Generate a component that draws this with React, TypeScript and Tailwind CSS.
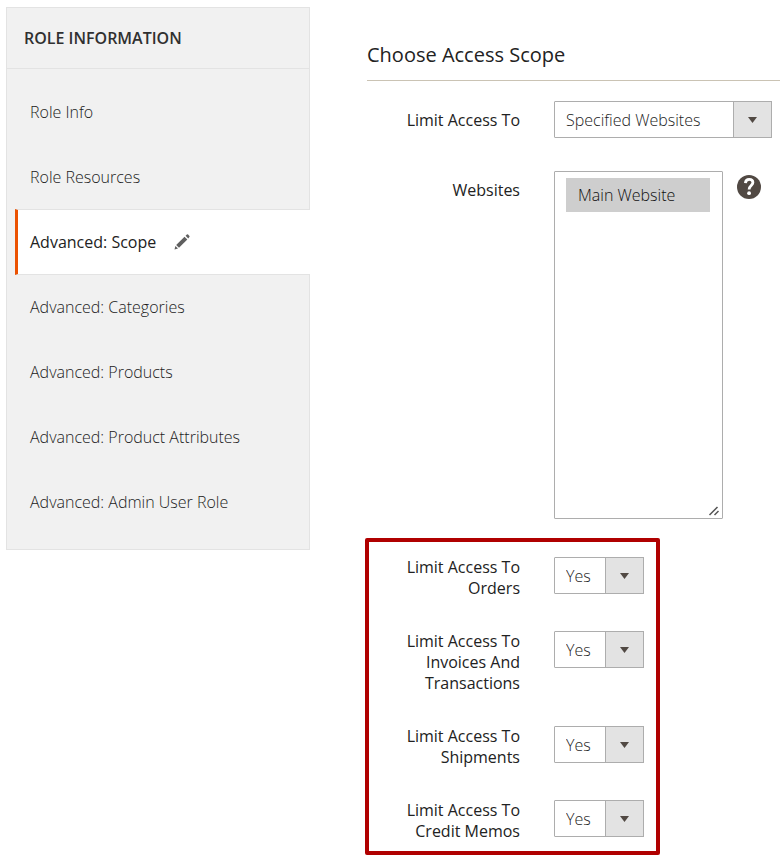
import { useState } from "react";
import type { ReactNode } from "react";
import clsx from "clsx";

const tabs = [
  "Role Info",
  "Role Resources",
  "Advanced: Scope",
  "Advanced: Categories",
  "Advanced: Products",
  "Advanced: Product Attributes",
  "Advanced: Admin User Role",
];

const limits = [
  { id: "limit-orders", label: "Limit Access To Orders" },
  { id: "limit-invoices", label: "Limit Access To Invoices And Transactions" },
  { id: "limit-shipments", label: "Limit Access To Shipments" },
  { id: "limit-creditmemos", label: "Limit Access To Credit Memos" },
];

function PencilIcon() {
  return (
    <svg viewBox="0 0 16 16" className="h-4 w-4 fill-[#5f5f5f]" aria-hidden="true">
      <path d="M11.6 1.8 12.9.6q.6-.5 1.2 0l1.3 1.3q.5.6 0 1.2L14.2 4.4z" />
      <path d="M10.5 2.7 13.3 5.5 5 13.7 2.2 10.9z" />
      <path d="M1.4 11.9 4 14.5.5 15.5z" />
    </svg>
  );
}

function HelpIcon() {
  return (
    <svg viewBox="0 0 24 24" className="h-6 w-6" aria-hidden="true">
      <circle cx="12" cy="12" r="12" className="fill-[#514943]" />
      <path
        d="M8.4 8.2C8.6 5.6 10 4.4 12.2 4.4c2.2 0 3.7 1.3 3.7 3.2 0 2.8-3.8 3.1-3.8 6.8"
        className="fill-none stroke-white stroke-[2.8px]"
      />
      <circle cx="12.1" cy="18.2" r="1.9" className="fill-white" />
    </svg>
  );
}

function ResizeGrip() {
  return (
    <svg
      viewBox="0 0 14 14"
      className="pointer-events-none absolute right-px bottom-px h-3.5 w-3.5 bg-white"
      aria-hidden="true"
    >
      <path d="M1.5 11 9.5 3M6.5 11 10.5 7" className="fill-none stroke-[#555555] stroke-[1.5px]" />
    </svg>
  );
}

type SelectProps = {
  id: string;
  options: string[];
  initial: string;
};

function Select({ id, options, initial }: SelectProps) {
  const [value, setValue] = useState(initial);

  return (
    <div className="relative">
      <select
        id={id}
        value={value}
        onChange={(e) => setValue(e.target.value)}
        className="h-[37px] appearance-none rounded-[1px] border border-[#adadad] bg-white pr-[52px] pl-[11px] text-base font-light text-[#1c1c1c]"
      >
        {options.map((option) => (
          <option key={option}>{option}</option>
        ))}
      </select>
      <span className="pointer-events-none absolute inset-y-0 right-0 flex w-[39px] items-center justify-center border border-[#adadad] bg-[#e3e3e3]">
        <svg viewBox="0 0 9 6" className="h-1.5 w-[9px] fill-[#514943]" aria-hidden="true">
          <path d="M0 0h9L4.5 6z" />
        </svg>
      </span>
    </div>
  );
}

type FieldProps = {
  id: string;
  label: string;
  labelClassName?: string;
  children: ReactNode;
};

function Field({ id, label, labelClassName, children }: FieldProps) {
  return (
    <div className="flex items-start gap-[34px]">
      <label
        htmlFor={id}
        className={clsx("w-[151px] shrink-0 text-right leading-[21px] font-medium", labelClassName)}
      >
        {label}
      </label>
      {children}
    </div>
  );
}

function Sidebar() {
  const [active, setActive] = useState("Advanced: Scope");

  return (
    <nav className="w-[304px] shrink-0 self-start border-y border-l border-[#e3e3e3] bg-[#f1f1f1]">
      <h2 className="border-r border-b border-[#e3e3e3] px-[17px] py-[18px] font-semibold text-[#303030] uppercase">
        Role Information
      </h2>
      <ul className="border-[#e3e3e3]">
        <li className="h-2.5 border-r border-[#e3e3e3]" />
        {tabs.map((tab) => (
          <li
            key={tab}
            className={clsx(
              "h-[65px]",
              tab === active ? "pl-2" : "border-r border-[#e3e3e3] pl-[11px]"
            )}
          >
            <a
              href="#"
              onClick={() => setActive(tab)}
              className={clsx(
                "flex items-center gap-[18px] pl-3",
                tab === active
                  ? "h-[66px] border-y border-l-3 border-y-[#e3e3e3] border-l-[#eb5202] bg-white font-medium text-[#222222]"
                  : "h-full font-light text-[#1c1c1c]"
              )}
            >
              {tab}
              {tab === active && <PencilIcon />}
            </a>
          </li>
        ))}
        <li className="h-[15px] border-r border-[#e3e3e3]" />
      </ul>
    </nav>
  );
}

export default function App() {
  return (
    <div className="flex bg-white pt-[7px] pl-1.5 font-['Open_Sans',sans-serif] text-base text-[#222222]">
      <Sidebar />

      <main className="min-w-0 flex-1 pt-8 pb-[9px] pl-[55px]">
        <h1 className="ml-0.5 border-b border-[#cac3b4] pb-[9px] text-xl leading-8 font-medium">
          Choose Access Scope
        </h1>

        <div className="flex flex-col gap-[33px] px-1 pt-5">
          <Field id="limit-access" label="Limit Access To" labelClassName="pt-[9px]">
            <Select
              id="limit-access"
              options={["All", "Specified Websites", "Specified Store Views"]}
              initial="Specified Websites"
            />
          </Field>
          <Field id="websites" label="Websites" labelClassName="pt-[9px]">
            <div className="flex items-start gap-3.5">
              <div className="relative flex">
                <select
                  id="websites"
                  multiple
                  defaultValue={["Main Website"]}
                  className="h-[348px] w-[169px] resize-y overflow-auto rounded-[1px] border border-[#adadad] bg-white py-1.5 pr-3 pl-[11px]"
                >
                  <option className="h-[34px] px-3 py-1.5 font-light">Main Website</option>
                </select>
                <ResizeGrip />
              </div>
              <button type="button" aria-label="Help" className="mt-1">
                <HelpIcon />
              </button>
            </div>
          </Field>
        </div>

        <div className="mt-[19px] flex w-fit flex-col gap-8 rounded-[2px] border-4 border-[#b00000] pt-[15px] pr-3 pb-[9px]">
          {limits.map(({ id, label }) => (
            <Field key={id} id={id} label={label}>
              <Select id={id} options={["Yes", "No"]} initial="Yes" />
            </Field>
          ))}
        </div>
      </main>
    </div>
  );
}
